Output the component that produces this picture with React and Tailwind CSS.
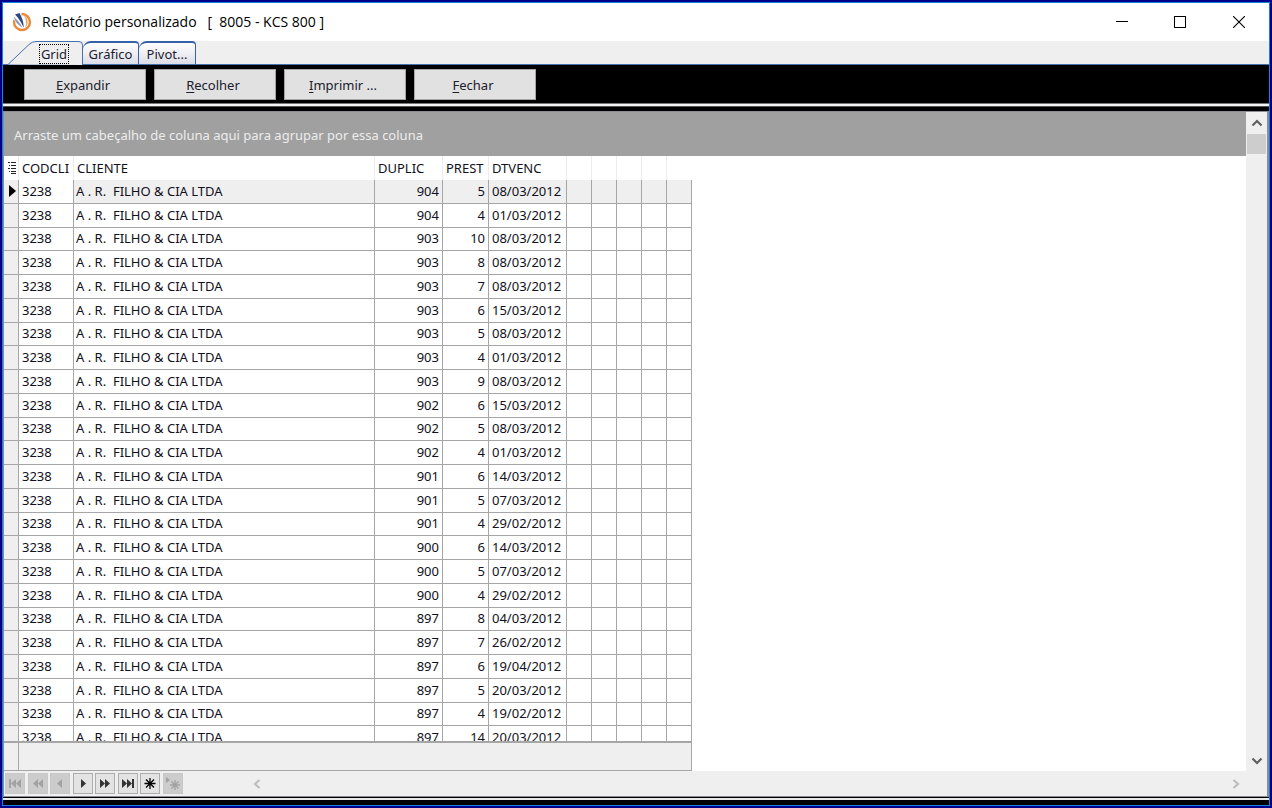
import React from "react";

const rows = [
  ["904", "5", "08/03/2012"],
  ["904", "4", "01/03/2012"],
  ["903", "10", "08/03/2012"],
  ["903", "8", "08/03/2012"],
  ["903", "7", "08/03/2012"],
  ["903", "6", "15/03/2012"],
  ["903", "5", "08/03/2012"],
  ["903", "4", "01/03/2012"],
  ["903", "9", "08/03/2012"],
  ["902", "6", "15/03/2012"],
  ["902", "5", "08/03/2012"],
  ["902", "4", "01/03/2012"],
  ["901", "6", "14/03/2012"],
  ["901", "5", "07/03/2012"],
  ["901", "4", "29/02/2012"],
  ["900", "6", "14/03/2012"],
  ["900", "5", "07/03/2012"],
  ["900", "4", "29/02/2012"],
  ["897", "8", "04/03/2012"],
  ["897", "7", "26/02/2012"],
  ["897", "6", "19/04/2012"],
  ["897", "5", "20/03/2012"],
  ["897", "4", "19/02/2012"],
  ["897", "14", "20/03/2012"],
];

const extraColumns = [0, 1, 2, 3, 4];

function AppLogo() {
  return (
    <svg width="20" height="20" viewBox="0 0 20 20" aria-hidden="true">
      <circle cx="10" cy="10" r="8" fill="#fff" stroke="#ea8a3c" strokeWidth="2.400" />
      <path d="M11.500 3c2.800 3.500 3.200 8.500 1.700 12.500 2-1.700 2.800-4.500 2.300-7.200C15 5.800 13.500 4 11.500 3z" fill="#f0a058" />
      <path d="M0 0h9.500v3L4 9 0 7z" fill="#fff" />
      <path d="M1.800 4.500C4.500 7 8 11 10.600 15.500 6.500 13.500 2.800 9.500 1.800 4.500z" fill="#8a98bb" />
      <path d="M3 2.500L7.500 1C10 5.500 11.800 10 11.700 15.800 9.500 10.500 6.500 6 3 2.500z" fill="#2b4786" />
    </svg>
  );
}

function TitleBar() {
  return (
    <header className="flex h-[38px] shrink-0 items-center bg-white">
      <div className="flex flex-1 items-center gap-[10px] pl-[9px]">
        <AppLogo />
        <h1 className="whitespace-pre font-['Open_Sans','Noto_Sans',sans-serif] text-[14px] leading-5 text-black">
          {"Relatório personalizado   [  8005 - KCS 800 ]"}
        </h1>
      </div>
      <div className="flex h-full">
        <button aria-label="Minimizar" className="flex w-[58px] items-center justify-center">
          <svg width="12" height="12" shapeRendering="crispEdges"><path d="M0 5.500h12" stroke="#000" /></svg>
        </button>
        <button aria-label="Maximizar" className="flex w-[58px] items-center justify-center">
          <svg width="12" height="12" shapeRendering="crispEdges"><path d="M.5.500h11v11H.5z" fill="none" stroke="#000" /></svg>
        </button>
        <button aria-label="Fechar janela" className="flex w-[60px] items-center justify-center">
          <svg width="12" height="12"><path d="M0 0l12 12M12 0L0 12" stroke="#000" strokeWidth="1.100" /></svg>
        </button>
      </div>
    </header>
  );
}

function Tabs() {
  return (
    <div role="tablist" className="flex h-6 shrink-0 items-end border-b border-[#4671ae] bg-[#efefef] text-[13px] leading-4 text-[#1c1c30]">
      <button role="tab" aria-selected="true" className="relative -mb-px h-6 w-[80px] pt-[2px] pl-[22px]">
        <svg className="absolute inset-0" width="80" height="24" aria-hidden="true">
          <path d="M5 23.500L26 3.500Q29 .5 33 .5H76Q79.500.500 79.500 4V24" fill="#efefef" stroke="#4671ae" />
        </svg>
        <span className="relative border border-dotted border-black px-px">Grid</span>
      </button>
      <button role="tab" aria-selected="false" className="h-[23px] w-[56px] rounded-tl-lg rounded-tr-sm border-t-2 border-r border-[#3560aa] bg-linear-to-b from-white to-[#dddde8] text-center">Gráfico</button>
      <button role="tab" aria-selected="false" className="h-[23px] w-[57px] rounded-tl-lg rounded-tr-sm border-t-2 border-r border-[#3560aa] bg-linear-to-b from-white to-[#dddde8] text-center">Pivot...</button>
    </div>
  );
}

function ToolButton({ letter, rest }) {
  return (
    <button className="h-[31px] w-[122px] border border-[#a6a6a6] bg-[#e1e1e1] pr-1 text-[13px] leading-4 text-[#20202c]">
      <span className="underline underline-offset-2">{letter}</span>{rest}
    </button>
  );
}

function Toolbar() {
  return (
    <div className="flex h-[38px] shrink-0 gap-2 bg-black pt-1 pl-[21px]">
      <ToolButton letter="E" rest="xpandir" />
      <ToolButton letter="R" rest="ecolher" />
      <ToolButton letter="I" rest="mprimir ..." />
      <ToolButton letter="F" rest="echar" />
    </div>
  );
}

function Chevron({ d, color }) {
  return (
    <svg width="12" height="12" viewBox="0 0 12 12" aria-hidden="true">
      <path d={d} fill="none" stroke={color} strokeWidth="2.200" />
    </svg>
  );
}

function Grid() {
  const head = "border-r border-[#ececec] text-left font-normal whitespace-nowrap";
  const cell = "border-r border-b border-[#a6a6a6] pb-[2px] whitespace-pre";
  return (
    <table className="w-[688px] table-fixed border-separate border-spacing-0 text-[13px] leading-4 text-[#101020]">
      <colgroup>
        <col className="w-[15px]" />
        <col className="w-[55px]" />
        <col className="w-[301px]" />
        <col className="w-[68px]" />
        <col className="w-[46px]" />
        <col className="w-[78px]" />
        {extraColumns.map((c) => <col key={c} className="w-[25px]" />)}
      </colgroup>
      <thead>
        <tr className="h-6 bg-white">
          <th className={head} aria-label="Indicador">
            <svg className="ml-1" width="9" height="12" shapeRendering="crispEdges">
              <path d="M0 .5h2M3 .5h5M1 3.500h1M3 3.500h5M0 6.500h2M3 6.500h5M1 9.500h1M3 9.500h5M3 11.500h5" stroke="#222" />
            </svg>
          </th>
          <th className={head + " pl-[3px]"}>CODCLI</th>
          <th className={head + " pl-[3px]"}>CLIENTE</th>
          <th className={head + " pl-[3px]"}>DUPLIC</th>
          <th className={head + " pl-[3px]"}>PREST</th>
          <th className={head + " pl-[3px]"}>DTVENC</th>
          {extraColumns.map((c) => <th key={c} className="border-r border-[#ececec] last:border-r-0" />)}
        </tr>
      </thead>
      <tbody>
        {rows.map(([duplic, prest, date], i) => (
          <tr key={i} className="h-6 bg-white first:bg-[#efefef] nth-[4n+3]:h-[23px]">
            <td className={cell + " bg-[#efefef]"}>
              {i === 0 && (
                <svg className="ml-[5px]" width="7" height="12" aria-label="Registro atual"><path d="M0 0l7 6-7 6z" fill="#000" /></svg>
              )}
            </td>
            <td className={cell + " bg-white pl-[3px]"}>3238</td>
            <td className={cell + " pl-[2px]"}>{"A . R.  FILHO & CIA LTDA"}</td>
            <td className={cell + " pr-[3px] text-right"}>{duplic}</td>
            <td className={cell + " pr-[3px] text-right"}>{prest}</td>
            <td className={cell + " pl-[3px]"}>{date}</td>
            {extraColumns.map((c) => <td key={c} className={cell} />)}
          </tr>
        ))}
      </tbody>
    </table>
  );
}

const navButtons = [
  { label: "Primeiro", off: true, d: "M1 2h2v9H1zM8 2v9L3 6.500zM13 2v9L8 6.500z" },
  { label: "Página anterior", off: true, d: "M7 2v9L2 6.500zM12 2v9L7 6.500z" },
  { label: "Anterior", off: true, d: "M9 2v9L4 6.500z" },
  { label: "Próximo", d: "M5 2v9l5-4.500z" },
  { label: "Próxima página", d: "M2 2v9l5-4.500zM7 2v9l5-4.500z" },
  { label: "Último", d: "M1 2v9l5-4.500zM6 2v9l5-4.500zM11 2h2v9h-2z" },
  { label: "Inserir", star: "M7 1v11M1.500 6.500h11M3 2.500l8 8M11 2.500l-8 8" },
  { label: "Acrescentar", off: true, d: "M0 0v6l4-3z", star: "M9 3v10M4 8h10M5.500 4.500l7 7M12.500 4.500l-7 7" },
];

function NavBar() {
  return (
    <div className="flex h-[25px] shrink-0 items-center bg-[#efefef]">
      <nav aria-label="Registros" className="flex w-[179px] justify-between pl-px">
        {navButtons.map((b) => (
          <button
            key={b.label}
            aria-label={b.label}
            disabled={b.off}
            className="flex h-[21px] w-5 items-center justify-center border border-[#adadad] bg-[#e3e3e3] text-[#333] disabled:border-[#c8c8c8] disabled:bg-[#cccccc] disabled:text-[#a2a2a2]"
          >
            <svg width="14" height="13" viewBox="0 0 14 13" className="shrink-0">
              {b.d && <path d={b.d} fill="currentColor" />}
              {b.star && <path d={b.star} stroke={b.off ? "currentColor" : "#000"} strokeWidth="1.300" />}
            </svg>
          </button>
        ))}
      </nav>
      <div className="flex flex-1 items-center justify-between pr-[25px] pl-[68px]">
        <button aria-label="Rolar para a esquerda"><Chevron d="M8.500 2L4 6l4.500 4" color="#bdbdbd" /></button>
        <button aria-label="Rolar para a direita"><Chevron d="M3.500 2L8 6l-4.500 4" color="#bdbdbd" /></button>
      </div>
    </div>
  );
}

export default function App() {
  return (
    <div className="h-screen border-2 border-[#00008c] font-['Noto_Sans','Open_Sans',sans-serif]">
      <div className="flex h-full flex-col border border-[#1583d8] bg-black">
        <TitleBar />
        <Tabs />
        <Toolbar />
        <div className="h-1 shrink-0 border-t border-b border-t-[#777] border-b-[#555] bg-[#f4f4f4]" />
        <main className="mt-1 flex min-h-0 flex-1 flex-col border-t border-r-2 border-b border-l border-[#8c8c94] bg-white">
          <div className="flex min-h-0 flex-1">
            <div className="flex min-w-0 flex-1 flex-col">
              <div className="flex h-11 shrink-0 items-center bg-[#a0a0a0] px-[10px] pt-[2px] text-[13px] leading-4 text-[#ececec]">
                Arraste um cabeçalho de coluna aqui para agrupar por essa coluna
              </div>
              <div className="min-h-0 flex-1 overflow-hidden">
                <Grid />
              </div>
              <div className="flex h-[30px] w-[688px] shrink-0 border-t-2 border-r border-b border-[#a6a6a6] bg-[#efefef]">
                <div className="w-[15px] border-r border-[#a6a6a6]" />
              </div>
            </div>
            <div className="flex w-[21px] shrink-0 flex-col items-center bg-[#efefef] px-px">
              <button aria-label="Rolar para cima" className="flex h-[22px] items-center"><Chevron d="M1.500 8.500L6 4l4.500 4.500" color="#606060" /></button>
              <div className="h-5 w-full bg-[#cdcdcd]" />
              <button aria-label="Rolar para baixo" className="mt-auto flex h-[22px] items-center"><Chevron d="M1.500 4.500L6 9l4.500-4.500" color="#606060" /></button>
            </div>
          </div>
          <NavBar />
        </main>
        <div className="mt-px mb-[5px] h-[2px] shrink-0 bg-[#e8e8e8]" />
      </div>
    </div>
  );
}
